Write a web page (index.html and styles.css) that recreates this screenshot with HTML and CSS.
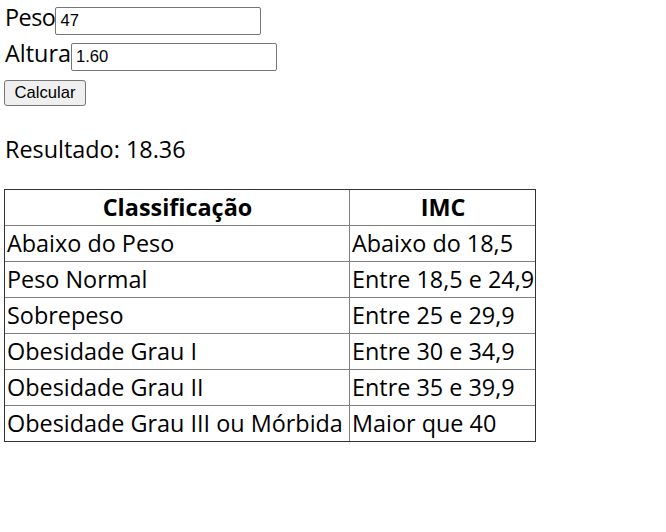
FILE: index.html
```html
<!DOCTYPE html>
<html lang="pt">
<head>
<meta charset="utf-8">
<title>IMC</title>
<link rel="stylesheet" href="styles.css">
</head>
<body>
<div class="page">
  <form class="form">
    <div class="field">
      <label class="label label-tight" for="peso">Peso</label>
      <input class="input" id="peso" type="text" value="47">
    </div>
    <div class="field">
      <label class="label" for="altura">Altura</label>
      <input class="input" id="altura" type="text" value="1.60">
    </div>
    <div class="actions">
      <button class="button" type="button">Calcular</button>
    </div>
  </form>
  <p class="result">Resultado: 18.36</p>
  <table class="table">
    <thead>
      <tr><th class="col-class">Classificação</th><th class="col-imc">IMC</th></tr>
    </thead>
    <tbody>
      <tr><td>Abaixo do Peso</td><td>Abaixo do 18,5</td></tr>
      <tr><td>Peso Normal</td><td>Entre 18,5 e 24,9</td></tr>
      <tr><td>Sobrepeso</td><td>Entre 25 e 29,9</td></tr>
      <tr><td>Obesidade Grau I</td><td>Entre 30 e 34,9</td></tr>
      <tr><td>Obesidade Grau II</td><td>Entre 35 e 39,9</td></tr>
      <tr><td>Obesidade Grau III ou Mórbida</td><td>Maior que 40</td></tr>
    </tbody>
  </table>
</div>
</body>
</html>
```
FILE: styles.css
```css
html, body {
  margin: 0;
  padding: 0;
  background: #fff;
}
body {
  font-family: "Open Sans", "Noto Sans", sans-serif;
  font-size: 23.4px;
  color: #000;
}
.page {
  padding: 0 4px;
}
.form {
  display: flex;
  flex-direction: column;
  margin: 0;
  padding-top: 1px;
}
.field {
  display: flex;
  align-items: baseline;
  height: 36px;
}
.label {
  line-height: 24px;
  padding-left: 1px;
  margin-top: 4px;
}
.label-tight {
  letter-spacing: -0.5px;
}
.input {
  box-sizing: border-box;
  width: 206px;
  height: 28px;
  margin: 0;
  padding: 1px 4px;
  border: 1px solid #767676;
  border-radius: 2px;
  font-family: "Liberation Sans", Arial, sans-serif;
  font-size: 16.6px;
  color: #000;
  background: #fff;
}
.actions {
  display: flex;
  padding-top: 7px;
}
.button {
  box-sizing: border-box;
  width: 82px;
  height: 26px;
  margin: 0;
  padding: 0 6px;
  border: 1px solid #767676;
  border-radius: 3px;
  background: #efefef;
  font-family: "Liberation Sans", Arial, sans-serif;
  font-size: 16.6px;
  color: #000;
}
.result {
  margin: 0;
  padding-left: 1px;
  padding-top: 25px;
  line-height: 36px;
}
.table {
  margin-top: 22px;
  border-collapse: separate;
  border-spacing: 0;
  border: 1px solid #333;
  width: 532px;
  table-layout: fixed;
}
.col-class {
  width: 341px;
}
.table th,
.table td {
  padding: 1px 1px 1px 2px;
  height: 33px;
  line-height: 33px;
  border-right: 1px solid #808080;
  border-bottom: 1px solid #808080;
  white-space: nowrap;
  overflow: visible;
}
.table th:last-child,
.table td:last-child {
  border-right: none;
}
.table tbody tr:last-child td {
  border-bottom: none;
}
.table th {
  font-weight: 700;
  text-align: center;
}
.table td {
  text-align: left;
}
```
